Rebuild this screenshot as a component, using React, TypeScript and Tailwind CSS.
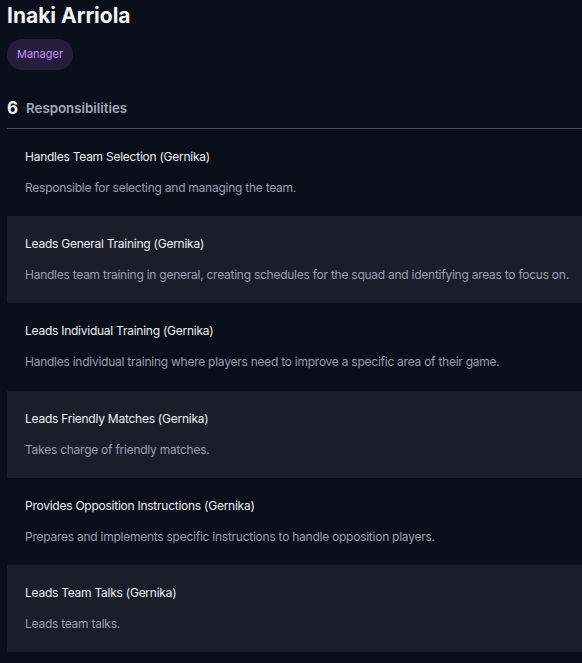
import React from 'react';

const responsibilities = [
  {
    title: 'Handles Team Selection (Gernika)',
    description: 'Responsible for selecting and managing the team.',
  },
  {
    title: 'Leads General Training (Gernika)',
    description:
      'Handles team training in general, creating schedules for the squad and identifying areas to focus on.',
  },
  {
    title: 'Leads Individual Training (Gernika)',
    description: 'Handles individual training where players need to improve a specific area of their game.',
  },
  {
    title: 'Leads Friendly Matches (Gernika)',
    description: 'Takes charge of friendly matches.',
  },
  {
    title: 'Provides Opposition Instructions (Gernika)',
    description: 'Prepares and implements specific instructions to handle opposition players.',
  },
  {
    title: 'Leads Team Talks (Gernika)',
    description: 'Leads team talks.',
  },
];

export default function App() {
  return (
    <div
      className="min-h-[663px] w-full bg-[#0b0f1c] pl-[7px] text-white"
      style={{ fontFamily: 'Inter, "Noto Sans", sans-serif' }}
    >
      {/* Header */}
      <h1 className="pt-[2px] text-[21px] font-bold leading-[28px] text-[#f3f4f8]">Inaki Arriola</h1>
      <div className="mt-[9px] flex">
        <span className="flex h-[31px] items-center rounded-full bg-[#261d3d] px-[10px] text-[11px] text-[#c88cf5]">
          Manager
        </span>
      </div>

      {/* Section heading */}
      <div className="mt-[28px] flex h-[22px] items-center gap-[8px]">
        <span className="text-[17px] font-bold text-[#f3f4f8]">6</span>
        <span className="text-[13.3px] font-semibold text-[#a3a7b8]">Responsibilities</span>
      </div>
      <div className="mt-[8px] h-px bg-[#474b60]"></div>

      {/* List */}
      <div>
        {responsibilities.map((r, i) => (
          <div
            key={r.title}
            className={`h-[87.2px] pl-[18px] pt-[18px] ${i % 2 === 1 ? 'bg-[#1a1e2b]' : ''}`}
          >
            <div className="text-[12px] leading-[20px] tracking-[-0.25px] text-[#eceef3]">{r.title}</div>
            <div className="mt-[11px] text-[12px] leading-[20px] tracking-[-0.25px] text-[#9a9eae]">
              {r.description}
            </div>
          </div>
        ))}
      </div>
    </div>
  );
}
